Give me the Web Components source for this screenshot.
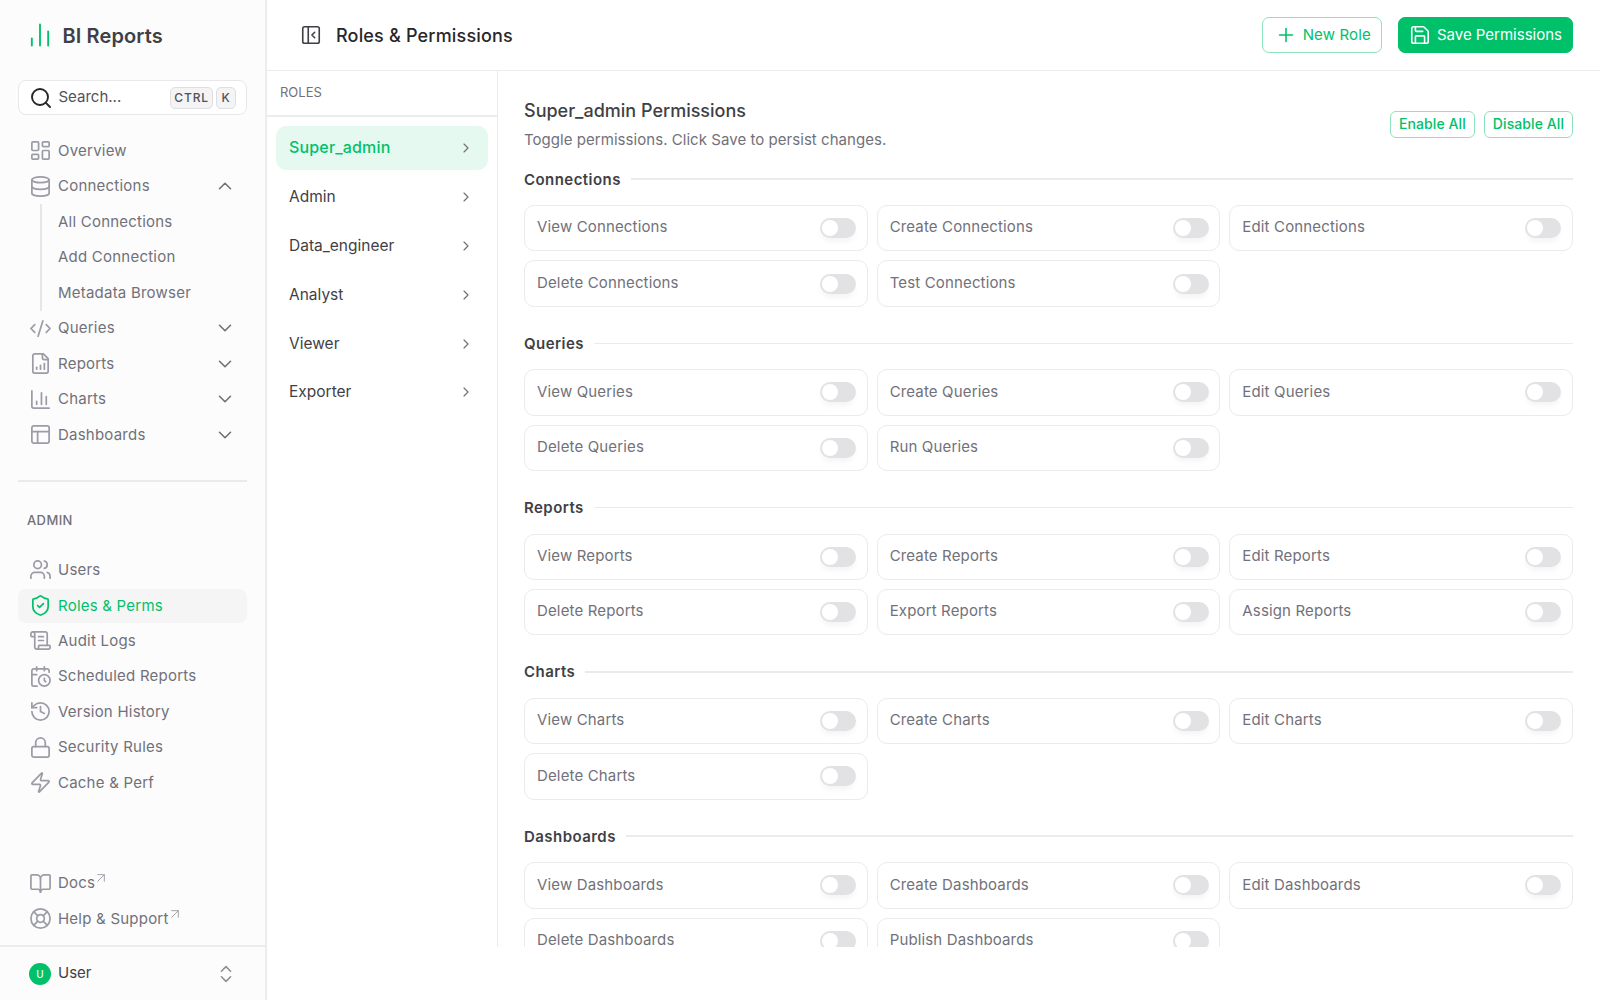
<!DOCTYPE html>
<html lang="en">
<head>
<meta charset="utf-8">
<title>Roles &amp; Permissions</title>
<style>
  html, body { margin: 0; height: 100%; background: #fff; }
  body { display: flex; height: 1000px; overflow: hidden; font-family: Inter, "Liberation Sans", sans-serif; font-size: 15px; color: #3f3f46; }
</style>
</head>
<body>
<bi-sidebar></bi-sidebar>
<bi-workspace>
  <bi-topbar slot="top" heading="Roles &amp; Permissions"></bi-topbar>
  <bi-roles slot="roles"></bi-roles>
  <bi-permissions slot="main" role="Super_admin"></bi-permissions>
</bi-workspace>

<script>
const ICONS = {
  logo: '<path d="M5 21v-6"/><path d="M12 21V3"/><path d="M19 21V9"/>',
  search: '<path d="m21 21-4.34-4.34"/><circle cx="11" cy="11" r="8"/>',
  overview: '<rect width="7" height="9" x="3" y="3" rx="1"/><rect width="7" height="5" x="14" y="3" rx="1"/><rect width="7" height="9" x="14" y="12" rx="1"/><rect width="7" height="5" x="3" y="16" rx="1"/>',
  database: '<ellipse cx="12" cy="5" rx="9" ry="3"/><path d="M3 5V19A9 3 0 0 0 21 19V5"/><path d="M3 12A9 3 0 0 0 21 12"/>',
  code: '<path d="m18 16 4-4-4-4"/><path d="m6 8-4 4 4 4"/><path d="m14.5 4-5 16"/>',
  report: '<path d="M15 2H6a2 2 0 0 0-2 2v16a2 2 0 0 0 2 2h12a2 2 0 0 0 2-2V7Z"/><path d="M14 2v4a2 2 0 0 0 2 2h4"/><path d="M8 18v-2"/><path d="M12 18v-4"/><path d="M16 18v-6"/>',
  chart: '<path d="M3 3v16a2 2 0 0 0 2 2h16"/><path d="M18 17V9"/><path d="M13 17V5"/><path d="M8 17v-3"/>',
  panels: '<rect width="18" height="18" x="3" y="3" rx="2"/><path d="M3 9h18"/><path d="M9 21V9"/>',
  users: '<path d="M16 21v-2a4 4 0 0 0-4-4H6a4 4 0 0 0-4 4v2"/><circle cx="9" cy="7" r="4"/><path d="M22 21v-2a4 4 0 0 0-3-3.87"/><path d="M16 3.13a4 4 0 0 1 0 7.75"/>',
  shield: '<path d="M20 13c0 5-3.5 7.5-7.66 8.95a1 1 0 0 1-.67-.01C7.5 20.5 4 18 4 13V6a1 1 0 0 1 1-1c2 0 4.5-1.2 6.24-2.72a1.17 1.17 0 0 1 1.52 0C14.51 3.81 17 5 19 5a1 1 0 0 1 1 1z"/><path d="m9 12 2 2 4-4"/>',
  scroll: '<path d="M15 12h-5"/><path d="M15 8h-5"/><path d="M19 17V5a2 2 0 0 0-2-2H4"/><path d="M8 21h12a2 2 0 0 0 2-2v-1a1 1 0 0 0-1-1H11a1 1 0 0 0-1 1v1a2 2 0 1 1-4 0V5a2 2 0 1 0-4 0v2a1 1 0 0 0 1 1h3"/>',
  calendar: '<path d="M21 7.5V6a2 2 0 0 0-2-2H5a2 2 0 0 0-2 2v14a2 2 0 0 0 2 2h3.5"/><path d="M16 2v4"/><path d="M8 2v4"/><path d="M3 10h5"/><path d="M17.5 17.5 16 16.3V14"/><circle cx="16" cy="16" r="6"/>',
  history: '<path d="M3 12a9 9 0 1 0 9-9 9.75 9.75 0 0 0-6.74 2.74L3 8"/><path d="M3 3v5h5"/><path d="M12 7v5l4 2"/>',
  lock: '<rect width="18" height="11" x="3" y="11" rx="2"/><path d="M7 11V7a5 5 0 0 1 10 0v4"/>',
  zap: '<path d="M4 14a1 1 0 0 1-.78-1.63l9.9-10.2a.5.5 0 0 1 .86.46l-1.92 6.02A1 1 0 0 0 13 10h7a1 1 0 0 1 .78 1.63l-9.9 10.2a.5.5 0 0 1-.86-.46l1.92-6.02A1 1 0 0 0 11 14z"/>',
  book: '<path d="M12 7v14"/><path d="M3 18a1 1 0 0 1-1-1V4a1 1 0 0 1 1-1h5a4 4 0 0 1 4 4 4 4 0 0 1 4-4h5a1 1 0 0 1 1 1v13a1 1 0 0 1-1 1h-6a3 3 0 0 0-3 3 3 3 0 0 0-3-3z"/>',
  buoy: '<circle cx="12" cy="12" r="10"/><path d="m4.93 4.93 4.24 4.24"/><path d="m14.83 9.17 4.24-4.24"/><path d="m14.83 14.83 4.24 4.24"/><path d="m9.17 14.83-4.24 4.24"/><circle cx="12" cy="12" r="4"/>',
  up: '<path d="m18 15-6-6-6 6"/>',
  down: '<path d="m6 9 6 6 6-6"/>',
  right: '<path d="m9 18 6-6-6-6"/>',
  updown: '<path d="m7 15 5 5 5-5"/><path d="m7 9 5-5 5 5"/>',
  collapse: '<rect width="18" height="18" x="3" y="3" rx="2"/><path d="M9 3v18"/><path d="m16 15-3-3 3-3"/>',
  plus: '<path d="M5 12h14"/><path d="M12 5v14"/>',
  save: '<path d="M15.2 3a2 2 0 0 1 1.4.6l3.8 3.8a2 2 0 0 1 .6 1.4V19a2 2 0 0 1-2 2H5a2 2 0 0 1-2-2V5a2 2 0 0 1 2-2z"/><path d="M17 21v-7a1 1 0 0 0-1-1H8a1 1 0 0 0-1 1v7"/><path d="M7 3v4a1 1 0 0 0 1 1h7"/>',
  external: '<path d="M7 7h10v10"/><path d="M7 17 17 7"/>'
};

class BiIcon extends HTMLElement {
  connectedCallback() {
    if (this.shadowRoot) return;
    const size = this.getAttribute('size') || 22;
    const weight = this.getAttribute('weight') || 1.75;
    this.attachShadow({ mode: 'open' }).innerHTML = `
      <style>:host{display:block;flex:none;width:${size}px;height:${size}px;line-height:0}</style>
      <svg xmlns="http://www.w3.org/2000/svg" width="${size}" height="${size}" viewBox="0 0 24 24" fill="none" stroke="currentColor" stroke-width="${weight}" stroke-linecap="round" stroke-linejoin="round">${ICONS[this.getAttribute('name')]}</svg>`;
  }
}
customElements.define('bi-icon', BiIcon);

class BiNavItem extends HTMLElement {
  connectedCallback() {
    if (this.shadowRoot) return;
    const icon = this.getAttribute('icon');
    const chevron = this.getAttribute('chevron');
    const link = this.hasAttribute('external');
    this.attachShadow({ mode: 'open' }).innerHTML = `
      <style>
        :host{display:flex;align-items:center;height:35.5px;box-sizing:border-box;padding:0 11px 0 10.5px;gap:6.5px;border-radius:8px;font-size:15px;letter-spacing:.015em;color:#71717a}
        :host([active]){background:#f5f5f6;color:#00c16a;height:34px;margin:1.5px 0 0}
        :host([sub]){padding-left:40px}
        bi-icon{color:#9c9ca6}
        :host([active]) bi-icon{color:#00c16a}
        .label{flex:1;display:flex;white-space:nowrap;margin-top:-1px}
        .ext{color:#9c9ca6;margin:-3px 0 0 -2px}
        .chev{color:#71717a}
      </style>
      ${icon ? `<bi-icon name="${icon}" size="23" weight="1.8"></bi-icon>` : ''}
      <span class="label"><span><slot></slot></span>${link ? '<bi-icon class="ext" name="external" size="16" weight="1.4"></bi-icon>' : ''}</span>
      ${chevron ? `<bi-icon class="chev" name="${chevron}"></bi-icon>` : ''}`;
  }
}
customElements.define('bi-nav-item', BiNavItem);

const sidebarTemplate = document.createElement('template');
sidebarTemplate.innerHTML = `
  <style>
    :host{display:flex;flex-direction:column;flex:none;width:267px;height:1000px;box-sizing:border-box;background:#fcfcfc;border-right:2px solid #ececee}
    .brand{display:flex;align-items:center;height:70px;padding-left:26px;gap:8.5px;color:#00c16a}
    .brand b{font-size:20px;font-weight:600;color:#3f3f46;letter-spacing:.005em;margin-top:1px}
    .search{display:flex;align-items:center;height:35px;margin:10px 18px 18px;padding:0 10px;gap:5.5px;border:1.5px solid #e8e8ea;border-radius:8px;background:#fff;color:#27272a;box-sizing:border-box}
    .search span{flex:1;font-size:15px;color:#52525b;margin-top:-3px}
    kbd{display:block;font:500 12px/20px Inter,"Liberation Sans",sans-serif;letter-spacing:.07em;padding:0 3px;border:1.5px solid #dfdfe3;border-radius:5px;background:#f4f4f5;color:#52525b}
    kbd + kbd{margin-left:-2.5px;padding:0 4.5px}
    nav{display:flex;flex-direction:column;margin:0 18px}
    .subs{position:relative}
    .subs::before{content:"";position:absolute;left:22px;top:0;bottom:0;width:1.5px;background:#e6e6e9}
    hr{height:1.5px;border:0;background:#ebebed;margin:27.9px 18px 0}
    .caption{font-size:13px;line-height:20px;font-weight:500;letter-spacing:.03em;color:#71717a;margin:28px 27px 22px}
    .foot{margin-top:auto;margin-bottom:8.6px}
    .user{display:flex;align-items:center;height:55px;box-sizing:border-box;padding:0 28px 0 29px;gap:7px;border-top:2px solid #ececee;font-size:15px;color:#3f3f46}
    .user i{display:flex;align-items:center;justify-content:center;width:22px;height:22px;border-radius:50%;background:#00c16a;color:#e8fff3;font:500 10px Inter,"Liberation Sans",sans-serif}
    .user span{flex:1;margin-top:-2px}
    .user bi-icon{color:#8f8f99}
  </style>
  <div class="brand"><bi-icon name="logo" size="28" weight="1.6"></bi-icon><b>BI Reports</b></div>
  <div class="search"><bi-icon name="search" size="24" weight="1.9"></bi-icon><span>Search...</span><kbd>CTRL</kbd><kbd>K</kbd></div>
  <nav>
    <bi-nav-item icon="overview">Overview</bi-nav-item>
    <bi-nav-item icon="database" chevron="up">Connections</bi-nav-item>
    <div class="subs">
      <bi-nav-item sub>All Connections</bi-nav-item>
      <bi-nav-item sub>Add Connection</bi-nav-item>
      <bi-nav-item sub>Metadata Browser</bi-nav-item>
    </div>
    <bi-nav-item icon="code" chevron="down">Queries</bi-nav-item>
    <bi-nav-item icon="report" chevron="down">Reports</bi-nav-item>
    <bi-nav-item icon="chart" chevron="down">Charts</bi-nav-item>
    <bi-nav-item icon="panels" chevron="down">Dashboards</bi-nav-item>
  </nav>
  <hr>
  <div class="caption">ADMIN</div>
  <nav>
    <bi-nav-item icon="users">Users</bi-nav-item>
    <bi-nav-item icon="shield" active>Roles &amp; Perms</bi-nav-item>
    <bi-nav-item icon="scroll">Audit Logs</bi-nav-item>
    <bi-nav-item icon="calendar">Scheduled Reports</bi-nav-item>
    <bi-nav-item icon="history">Version History</bi-nav-item>
    <bi-nav-item icon="lock">Security Rules</bi-nav-item>
    <bi-nav-item icon="zap">Cache &amp; Perf</bi-nav-item>
  </nav>
  <nav class="foot">
    <bi-nav-item icon="book" external>Docs</bi-nav-item>
    <bi-nav-item icon="buoy" external>Help &amp; Support</bi-nav-item>
  </nav>
  <div class="user"><i>U</i><span>User</span><bi-icon name="updown"></bi-icon></div>`;

class BiSidebar extends HTMLElement {
  constructor() {
    super();
    this.attachShadow({ mode: 'open' });
    this.shadowRoot.appendChild(sidebarTemplate.content.cloneNode(true));
  }
}
customElements.define('bi-sidebar', BiSidebar);

class BiWorkspace extends HTMLElement {
  constructor() {
    super();
    this.attachShadow({ mode: 'open' }).innerHTML = `
      <style>
        :host{display:flex;flex-direction:column;flex:1;min-width:0;height:1000px}
        .body{display:flex;height:876px;overflow:hidden}
      </style>
      <slot name="top"></slot>
      <div class="body"><slot name="roles"></slot><slot name="main"></slot></div>`;
  }
}
customElements.define('bi-workspace', BiWorkspace);

class BiButton extends HTMLElement {
  connectedCallback() {
    if (this.shadowRoot) return;
    const icon = this.getAttribute('icon');
    this.attachShadow({ mode: 'open' }).innerHTML = `
      <style>
        :host{display:inline-flex;align-items:center;box-sizing:border-box;height:35.5px;padding:0 10px 0 12px;gap:6px;border:1.5px solid #8ce3bc;border-radius:7px;background:#fff;color:#00c16a;font-size:15px;letter-spacing:.01em;white-space:nowrap}
        :host([solid]){background:#00c16a;border-color:#00c16a;color:#fff;letter-spacing:0;padding-left:10px}
        :host([small]){height:27px;padding:0 8px;font-size:14px;font-weight:500;border-radius:6px;letter-spacing:.006em}
        span{margin-top:-2px}
        :host([small]) span{margin-top:-3px}
      </style>
      ${icon ? `<bi-icon name="${icon}"></bi-icon>` : ''}<span><slot></slot></span>`;
  }
}
customElements.define('bi-button', BiButton);

class BiTopbar extends HTMLElement {
  connectedCallback() {
    if (this.shadowRoot) return;
    this.attachShadow({ mode: 'open' }).innerHTML = `
      <style>
        :host{display:flex;align-items:center;height:71px;box-sizing:border-box;flex:none;padding:0 27px 0 33px;border-bottom:1.5px solid #ececee}
        bi-icon{color:#3f3f46}
        h1{flex:1;margin:0 0 0 14px;font-size:18px;font-weight:500;color:#27272a;letter-spacing:.01em}
        .actions{display:flex;gap:16px}
      </style>
      <bi-icon name="collapse"></bi-icon>
      <h1>${this.getAttribute('heading').replace('&', '&amp;')}</h1>
      <div class="actions">
        <bi-button icon="plus">New Role</bi-button>
        <bi-button icon="save" solid>Save Permissions</bi-button>
      </div>`;
  }
}
customElements.define('bi-topbar', BiTopbar);

class BiRoleItem extends HTMLElement {
  constructor() {
    super();
    this.attachShadow({ mode: 'open' }).innerHTML = `
      <style>
        :host{display:flex;align-items:center;height:44px;box-sizing:border-box;padding:0 14px 0 13px;border-radius:10px;font-size:15.5px;color:#3f3f46;letter-spacing:0}
        :host([active]){background:#e6f9f0;color:#00c16a;font-weight:500;font-size:16px;letter-spacing:.01em}
        span{flex:1;margin-top:-1px}
        :host([active]) span{margin-top:-2px}
        bi-icon{color:#71717a}
      </style>
      <span><slot></slot></span><bi-icon name="right" size="16"></bi-icon>`;
  }
}
customElements.define('bi-role-item', BiRoleItem);

class BiRoles extends HTMLElement {
  constructor() {
    super();
    const names = ['Super_admin', 'Admin', 'Data_engineer', 'Analyst', 'Viewer', 'Exporter'];
    this.attachShadow({ mode: 'open' }).innerHTML = `
      <style>
        :host{display:block;flex:none;width:231px;box-sizing:border-box;border-right:1.5px solid #ececee}
        .head{height:45.5px;box-sizing:border-box;padding:10px 13px;line-height:22px;font-size:13px;color:#71717a;border-bottom:2px solid #ececee}
        .list{display:flex;flex-direction:column;gap:4.9px;padding:9.5px 9px}
      </style>
      <div class="head">ROLES</div>
      <div class="list">${names.map((n, i) => `<bi-role-item ${i ? '' : 'active'}>${n}</bi-role-item>`).join('')}</div>`;
  }
}
customElements.define('bi-roles', BiRoles);

class BiSwitch extends HTMLElement {
  constructor() {
    super();
    this.attachShadow({ mode: 'open' }).innerHTML = `
      <style>
        :host{display:block;flex:none;position:relative;width:36px;height:20px;border-radius:10px;background:#e2e2e5;box-shadow:0 5px 6px -2px rgba(0,0,0,.05)}
        i{position:absolute;left:2px;top:2px;width:16px;height:16px;border-radius:50%;background:#fff}
      </style>
      <i></i>`;
  }
}
customElements.define('bi-switch', BiSwitch);

class BiPermCard extends HTMLElement {
  constructor() {
    super();
    this.attachShadow({ mode: 'open' }).innerHTML = `
      <style>
        :host{display:flex;align-items:center;justify-content:space-between;height:46.4px;box-sizing:border-box;padding:0 10.5px 0 12px;border:1.5px solid #ebebed;border-radius:10px;background:#fff;font-size:15px;color:#71717a;letter-spacing:.01em}
        span{margin-top:-2.5px}
      </style>
      <span><slot></slot></span><bi-switch></bi-switch>`;
  }
}
customElements.define('bi-perm-card', BiPermCard);

class BiPermSection extends HTMLElement {
  connectedCallback() {
    if (this.shadowRoot) return;
    const title = this.getAttribute('title');
    const perms = this.getAttribute('perms').split(',');
    this.attachShadow({ mode: 'open' }).innerHTML = `
      <style>
        :host{display:block;margin-bottom:26.5px}
        .title{display:flex;align-items:center;gap:10px;height:20px;margin-bottom:16px;font-size:15px;font-weight:600;color:#3f3f46;letter-spacing:.03em}
        .title::after{content:"";flex:1;height:1.5px;background:#ebebed}
        .grid{display:grid;grid-template-columns:repeat(3,1fr);gap:9px}
      </style>
      <div class="title">${title}</div>
      <div class="grid">${perms.map(p => `<bi-perm-card>${p} ${title}</bi-perm-card>`).join('')}</div>`;
  }
}
customElements.define('bi-perm-section', BiPermSection);

class BiPermissions extends HTMLElement {
  connectedCallback() {
    if (this.shadowRoot) return;
    const role = this.getAttribute('role');
    this.attachShadow({ mode: 'open' }).innerHTML = `
      <style>
        :host{display:block;flex:1;min-width:0;padding:27px 27px 0 26px}
        .head{display:flex;align-items:center;justify-content:space-between;margin-bottom:18px}
        h2{margin:0 0 5px;font-size:18px;line-height:26px;font-weight:500;color:#3f3f46;letter-spacing:0}
        p{margin:0;font-size:15px;line-height:22px;color:#71717a;letter-spacing:.003em}
        .actions{display:flex;gap:9px}
      </style>
      <div class="head">
        <div><h2>${role} Permissions</h2><p>Toggle permissions. Click Save to persist changes.</p></div>
        <div class="actions"><bi-button small>Enable All</bi-button><bi-button small>Disable All</bi-button></div>
      </div>
      <bi-perm-section title="Connections" perms="View,Create,Edit,Delete,Test"></bi-perm-section>
      <bi-perm-section title="Queries" perms="View,Create,Edit,Delete,Run"></bi-perm-section>
      <bi-perm-section title="Reports" perms="View,Create,Edit,Delete,Export,Assign"></bi-perm-section>
      <bi-perm-section title="Charts" perms="View,Create,Edit,Delete"></bi-perm-section>
      <bi-perm-section title="Dashboards" perms="View,Create,Edit,Delete,Publish"></bi-perm-section>`;
  }
}
customElements.define('bi-permissions', BiPermissions);
</script>
</body>
</html>
